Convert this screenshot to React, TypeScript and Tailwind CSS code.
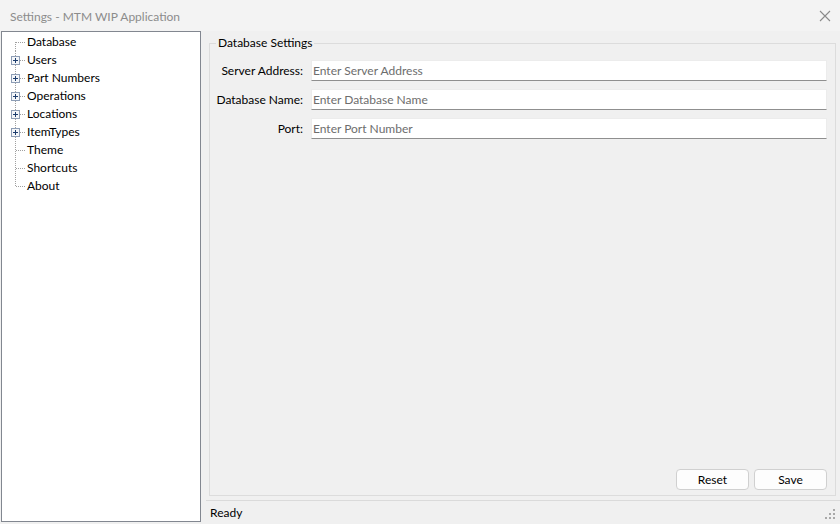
import React from "react";

const treeItems = [
  { label: "Database", expandable: false },
  { label: "Users", expandable: true },
  { label: "Part Numbers", expandable: true },
  { label: "Operations", expandable: true },
  { label: "Locations", expandable: true },
  { label: "ItemTypes", expandable: true },
  { label: "Theme", expandable: false },
  { label: "Shortcuts", expandable: false },
  { label: "About", expandable: false },
];

const fields = [
  { label: "Server Address:", placeholder: "Enter Server Address" },
  { label: "Database Name:", placeholder: "Enter Database Name" },
  { label: "Port:", placeholder: "Enter Port Number" },
];

const uiFont = '"Lato", "Noto Sans", sans-serif';

function TreeConnector({ first, last, expandable }: { first: boolean; last: boolean; expandable: boolean }) {
  /* ---- dotted WinForms tree lines + optional plus box ---- */
  return (
    <svg width="25" height="18" viewBox="0 0 25 18" className="shrink-0">
      <line
        x1="13.5"
        y1={first ? 9 : 0}
        x2="13.5"
        y2={last ? 9 : 18}
        stroke="#a0a0a0"
        strokeWidth="1"
        strokeDasharray="1 1"
      />
      <line x1="14" y1="9.5" x2="23" y2="9.5" stroke="#a0a0a0" strokeWidth="1" strokeDasharray="1 1" />
      {expandable && (
        <g>
          <rect x="9.5" y="5.5" width="8" height="8" fill="#f4f6f9" stroke="#8d9db5" />
          <line x1="11" y1="9.5" x2="16" y2="9.5" stroke="#1d3d6d" />
          <line x1="13.5" y1="7" x2="13.5" y2="12" stroke="#1d3d6d" />
        </g>
      )}
    </svg>
  );
}

export default function App() {
  return (
    <div
      className="w-[840px] h-[524px] bg-[#f0f0f0] flex flex-col overflow-hidden text-[12px] text-black"
      style={{ fontFamily: uiFont }}
    >
      {/* title bar */}
      <div className="h-[31px] shrink-0 bg-[#f3f3f3] flex items-center justify-between pl-[10px] pr-[9px]">
        <span className="text-[12px] text-[#8c8c8c] pt-[3px]">Settings - MTM WIP Application</span>
        <svg width="12" height="12" viewBox="0 0 12 12">
          <path d="M1 1 L11 11 M11 1 L1 11" stroke="#8a8a8a" strokeWidth="1.1" />
        </svg>
      </div>

      <div className="flex flex-1 min-h-0">
        {/* tree view */}
        <div className="ml-[1px] w-[200px] h-[491px] shrink-0 bg-white border border-[#828790] pt-px">
          {treeItems.map((item, i) => (
            <div key={item.label} className="flex items-center h-[18px]">
              <TreeConnector first={i === 0} last={i === treeItems.length - 1} expandable={item.expandable} />
              <span className="leading-[18px] whitespace-nowrap">{item.label}</span>
            </div>
          ))}
        </div>

        {/* right side */}
        <div className="flex-1 flex flex-col min-w-0">
          <div className="pl-[8px] pr-[4px] pt-[4px]">
            <fieldset className="h-[461px] border border-[#dcdcdc] flex flex-col pl-0 pr-[8px] pb-[5px]">
              <legend className="ml-[6px] px-[2px] leading-[16px]">Database Settings</legend>
              <div className="flex flex-col gap-[8px] mt-[9px]">
                {fields.map((f) => (
                  <div key={f.label} className="flex items-center h-[21px]">
                    <span className="w-[93px] text-right shrink-0 whitespace-nowrap">{f.label}</span>
                    <input
                      className="ml-[8px] flex-1 h-[21px] bg-white border border-[#ececec] border-b-[#8f8f8f] px-[1px] pb-[1px] outline-none placeholder:text-[#6d6d6d] text-[12px]"
                      style={{ fontFamily: uiFont }}
                      placeholder={f.placeholder}
                    />
                  </div>
                ))}
              </div>
              <div className="flex-1" />
              <div className="flex justify-end gap-[5px]">
                <button className="w-[73px] h-[21px] bg-[#fdfdfd] border border-[#d0d0d0] rounded-[4px] text-[12px] leading-none">
                  Reset
                </button>
                <button className="w-[73px] h-[21px] bg-[#fdfdfd] border border-[#d0d0d0] rounded-[4px] text-[12px] leading-none">
                  Save
                </button>
              </div>
            </fieldset>
          </div>

          {/* status bar */}
          <div className="mt-[4px] ml-[5px] flex-1 border-t border-[#dadada] flex items-center justify-between pl-[4px] pr-[5px]">
            <span className="pt-[1px]">Ready</span>
            <svg width="10" height="10" viewBox="0 0 10 10" className="self-end mb-[5px]">
              <rect x="8" y="0" width="2" height="2" fill="#a8a8a8" />
              <rect x="4" y="4" width="2" height="2" fill="#a8a8a8" />
              <rect x="8" y="4" width="2" height="2" fill="#a8a8a8" />
              <rect x="0" y="8" width="2" height="2" fill="#a8a8a8" />
              <rect x="4" y="8" width="2" height="2" fill="#a8a8a8" />
              <rect x="8" y="8" width="2" height="2" fill="#a8a8a8" />
            </svg>
          </div>
        </div>
      </div>
    </div>
  );
}
